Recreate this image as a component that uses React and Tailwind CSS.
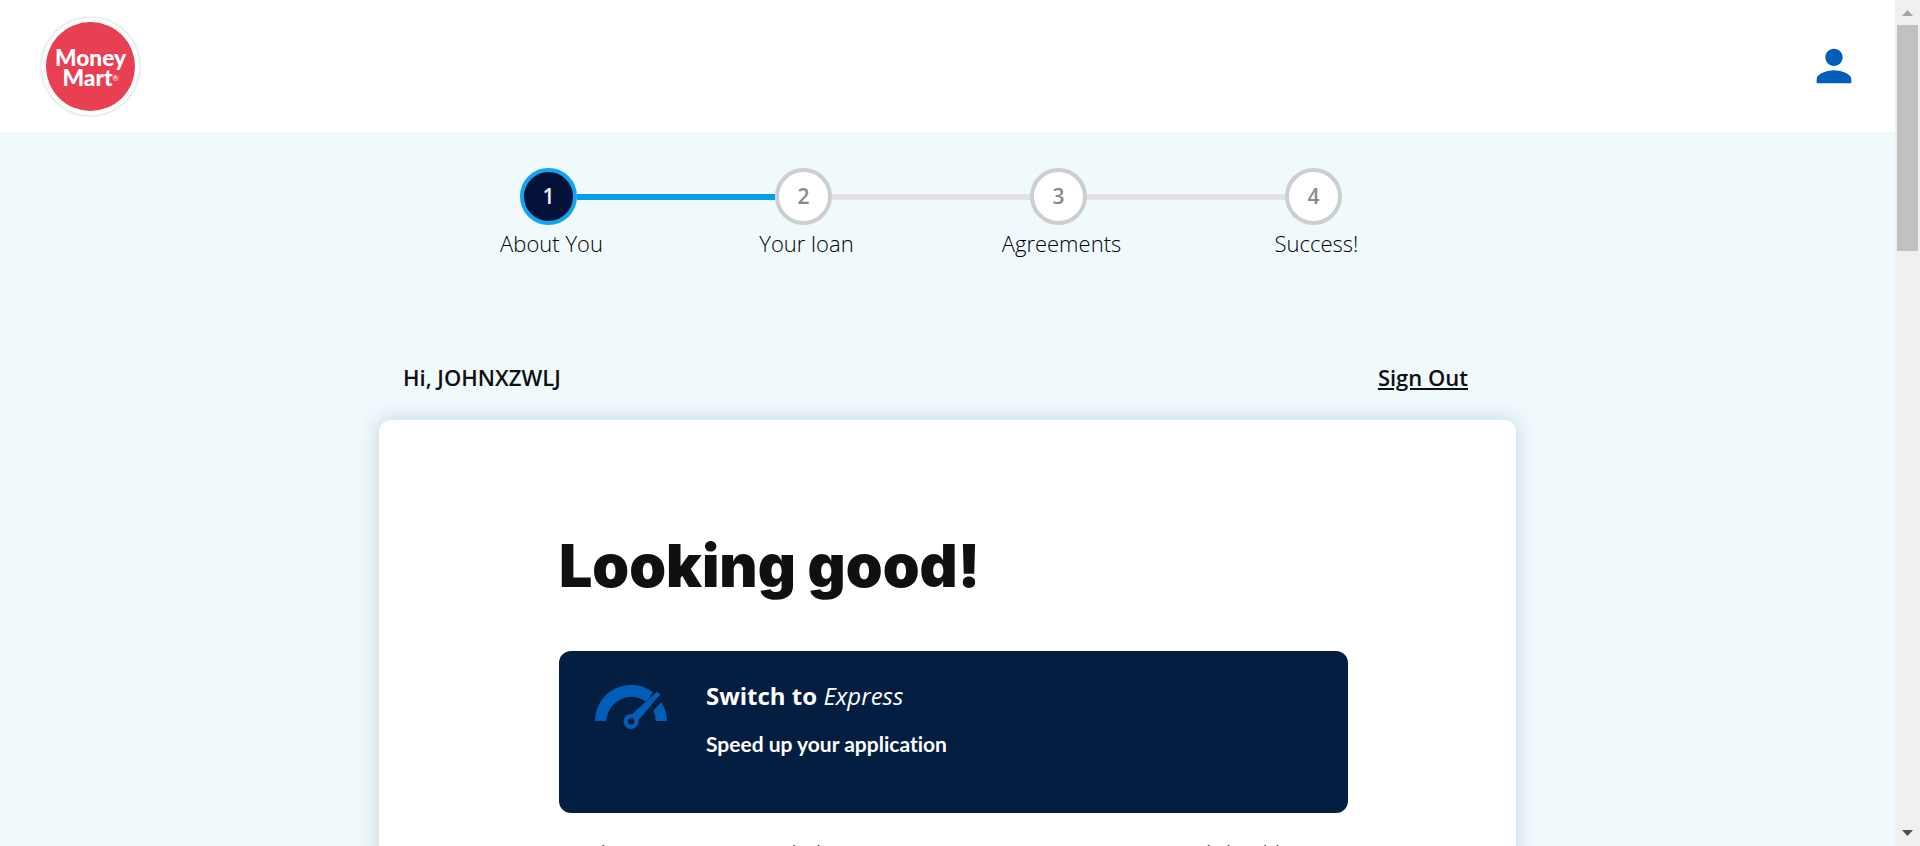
const STEPS = [
  { n: 1, label: "About You" },
  { n: 2, label: "Your loan" },
  { n: 3, label: "Agreements" },
  { n: 4, label: "Success!" },
];

function Logo() {
  return (
    <a
      href="#home"
      aria-label="Money Mart"
      className="flex size-[99px] items-center justify-center rounded-full border border-[#f1f1f1] bg-white shadow-[0_0_2px_#cccccc]"
    >
      <svg viewBox="0 0 90 90" className="size-[89px]">
        <circle cx="45" cy="45" r="45" fill="#e83f53" />
        <g fill="#fff" fontFamily="Lato, sans-serif" fontWeight="900">
          <text x="45" y="44" fontSize="23" textAnchor="middle">Money</text>
          <text x="42" y="65" fontSize="23" textAnchor="middle">Mart</text>
          <text x="67" y="60" fontSize="8" fontWeight="400">®</text>
        </g>
      </svg>
    </a>
  );
}

function Header() {
  return (
    <header className="flex h-[132px] items-center justify-between bg-white pl-[41px] pr-[35px]">
      <Logo />
      <button type="button" aria-label="Account" className="text-[#005eb8]">
        <svg viewBox="0 0 24 24" fill="currentColor" className="size-[52px]">
          <path d="M12 12c2.21 0 4-1.79 4-4s-1.790-4-4-4-4 1.790-4 4 1.790 4 4 4zm0 2c-2.670 0-8 1.340-8 4v2h16v-2c0-2.660-5.330-4-8-4z" />
        </svg>
      </button>
    </header>
  );
}

function Stepper() {
  return (
    <div className="flex justify-center pt-9 pr-[33px]">
      <ol className="flex w-[1020px] max-w-full">
        {STEPS.map((step, i) => (
          <li key={step.n} className="flex flex-1 flex-col items-center">
            <div className="flex w-full items-center">
              <span className={`h-1.5 flex-1 ${i === 0 ? "" : i === 1 ? "bg-[#049ee9]" : "bg-[#e2e2e2]"}`} />
              <span
                className={`flex size-[57px] items-center justify-center rounded-full border-4 text-[21px] font-semibold ${
                  i === 0 ? "border-[#10a5f0] bg-[#04123a] text-[#f0f0f0]" : "border-[#cbcfd2] bg-white text-[#868b8f]"
                }`}
              >
                {step.n}
              </span>
              <span className={`h-1.5 flex-1 ${i === 3 ? "" : i === 0 ? "bg-[#049ee9]" : "bg-[#e2e2e2]"}`} />
            </div>
            <span className="pl-1.5 pt-[3px] text-[22px] leading-[30px] font-light text-black">{step.label}</span>
          </li>
        ))}
      </ol>
    </div>
  );
}

function Gauge() {
  return (
    <svg viewBox="0 0 72 44" className="mt-[3px] h-11 w-[72px] shrink-0">
      <path d="M0 36A36 36 0 0 1 58 7.400L51 16.500A25 25 0 0 0 11.500 36Z" fill="#005eb8" />
      <path d="M66.300 17A36 36 0 0 1 72 36H60.500A24 24 0 0 0 58.500 25.500Z" fill="#005eb8" />
      <path d="M35 31L59.500 9L62 6.500L65.300 9.500L63 12L42 37Z" fill="#005eb8" />
      <circle cx="36" cy="36.500" r="7.500" fill="#005eb8" />
      <circle cx="36" cy="36.500" r="3.200" fill="#041e42" />
    </svg>
  );
}

function Scrollbar() {
  return (
    <div aria-hidden="true" className="flex w-[25px] shrink-0 flex-col items-center bg-[#f0f0f0]">
      <svg viewBox="0 0 25 25" className="size-[25px]">
        <path d="M7 16L12.500 10L18 16Z" fill="#a3a3a3" />
      </svg>
      <div className="h-[226px] w-[21px] bg-[#c1c1c1]" />
      <svg viewBox="0 0 25 25" className="mt-auto size-[25px]">
        <path d="M7 9L12.500 15L18 9Z" fill="#505050" />
      </svg>
    </div>
  );
}

export default function App() {
  return (
    <div className="flex h-screen overflow-hidden bg-[#f0f9fc] font-['Open_Sans',sans-serif] text-[#101010]">
      <div className="min-w-0 flex-1 overflow-hidden">
        <Header />
        <Stepper />
        <main className="mx-auto w-3/5 pt-[103px]">
          <div className="flex items-center justify-between pl-6 pr-12 text-[22px] leading-8 font-semibold">
            <p>Hi, JOHNXZWLJ</p>
            <a href="#sign-out" className="underline decoration-2 underline-offset-2">
              Sign Out
            </a>
          </div>
          <section className="mt-[27px] rounded-xl bg-white pt-[110px] pr-[168px] pb-24 pl-[180px] shadow-[0_0_20px_#bfd2dd]">
            <h1 className="font-[Inter,sans-serif] text-[59px] leading-[72px] font-black">Looking good!</h1>
            <div className="mt-[49px] flex h-[162px] gap-[39px] rounded-xl bg-[#041e42] px-9 pt-[31px] text-white">
              <Gauge />
              <div>
                <h2 className="text-2xl leading-7 font-bold">
                  Switch to <em className="font-normal">Express</em>
                </h2>
                <p className="mt-5 font-[Lato,sans-serif] text-[21px] leading-7 font-bold [font-variant-ligatures:none]">
                  Speed up your application
                </p>
              </div>
            </div>
            <p className="mt-[25px] text-xl leading-[30px] text-[#333333]">
              Send us your income, including any extra income source you earn and should report.
            </p>
          </section>
        </main>
      </div>
      <Scrollbar />
    </div>
  );
}
